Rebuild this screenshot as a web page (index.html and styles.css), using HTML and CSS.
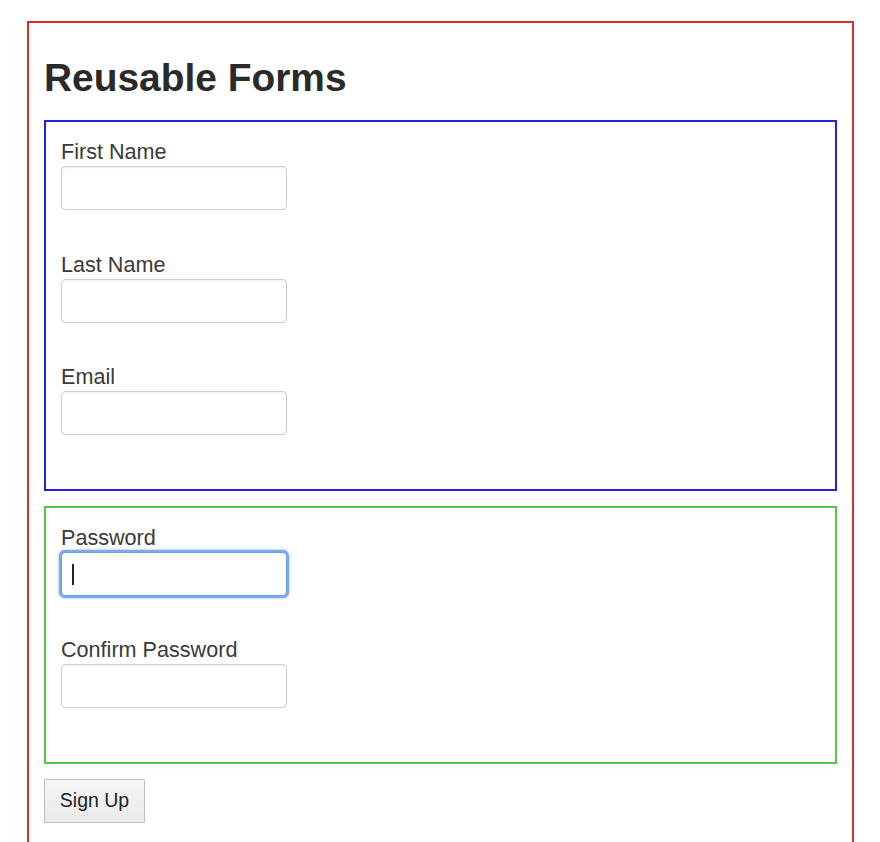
FILE: index.html
```html
<!DOCTYPE html>
<html lang="en">
<head>
<meta charset="utf-8">
<title>Reusable Forms</title>
<link rel="stylesheet" href="styles.css">
</head>
<body>
<div class="app">
  <h1 class="title">Reusable Forms</h1>
  <div class="fieldset fieldset-blue">
    <div class="group">
      <label class="label" for="first">First Name</label>
      <input class="input" id="first" type="text">
    </div>
    <div class="group">
      <label class="label" for="last">Last Name</label>
      <input class="input" id="last" type="text">
    </div>
    <div class="group">
      <label class="label" for="email">Email</label>
      <input class="input" id="email" type="text">
    </div>
  </div>
  <div class="fieldset fieldset-green">
    <div class="group">
      <label class="label" for="pw">Password</label>
      <div class="input-wrap">
        <input class="input input-focused" id="pw" type="password">
        <span class="caret"></span>
      </div>
    </div>
    <div class="group">
      <label class="label" for="pw2">Confirm Password</label>
      <input class="input" id="pw2" type="password">
    </div>
  </div>
  <button class="button" type="button">Sign Up</button>
</div>
</body>
</html>
```

FILE: styles.css
```css
html, body {
  margin: 0;
  padding: 0;
  background: #ffffff;
}

body {
  padding: 21px 26px 0 27px;
  font-family: "Liberation Sans", Arial, Helvetica, sans-serif;
  color: #2b2b2b;
  overflow: hidden;
}

.app {
  border: 2px solid #d8302e;
  padding: 15px 15px 40px;
}

.title {
  margin: 18px 0 20px;
  font-size: 38.9px;
  line-height: 44px;
  font-weight: bold;
  color: #2a2a2a;
}

.fieldset {
  border: 2px solid #1f1ff0;
  padding: 18px 15px 11px;
  margin-bottom: 15px;
}

.fieldset-green {
  border-color: #55c544;
}

.group {
  display: flex;
  flex-direction: column;
  align-items: flex-start;
  margin-bottom: 42.5px;
}

.label {
  display: block;
  font-size: 21.6px;
  line-height: 23px;
  margin-bottom: 3px;
  color: #3a3a3a;
}

.input-wrap {
  position: relative;
}

.input {
  display: block;
  box-sizing: border-box;
  width: 226px;
  height: 44px;
  margin: 0;
  padding: 0 10px;
  border: 1px solid #cfcfcf;
  border-radius: 4px;
  background: #ffffff;
  box-shadow: inset 0 1px 2px rgba(0, 0, 0, 0.07);
  font-family: inherit;
  font-size: 19px;
  outline: none;
}

.input-focused {
  border-color: #6d9de9;
  box-shadow: 0 0 0 2px #7ea8ee, 0 0 2px 3px rgba(126, 168, 238, 0.45);
}

.caret {
  position: absolute;
  left: 11px;
  top: 12px;
  width: 1.5px;
  height: 21px;
  background: #222222;
}

.button {
  display: block;
  box-sizing: border-box;
  width: 101px;
  height: 44px;
  margin: 0;
  padding: 0;
  border: 1px solid #bdbdbd;
  border-radius: 1px;
  background: linear-gradient(#f6f6f6, #e9e9e9);
  font-family: inherit;
  font-size: 19.5px;
  color: #222222;
}
```
